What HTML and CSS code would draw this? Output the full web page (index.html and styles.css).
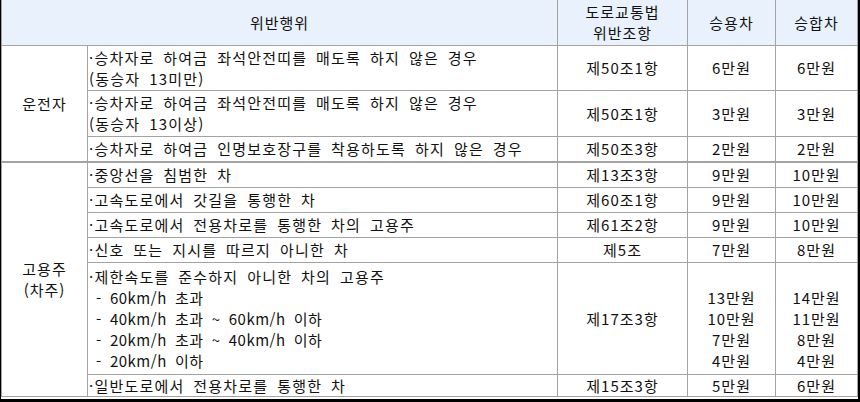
FILE: index.html
```html
<!DOCTYPE html>
<html lang="ko">
<head>
<meta charset="utf-8">
<title>위반행위</title>
<link rel="stylesheet" href="styles.css">
</head>
<body>
<div class="frame">
<table class="fines">
<colgroup>
<col class="c-who"><col class="c-act"><col class="c-law"><col class="c-car"><col class="c-van">
</colgroup>
<thead>
<tr class="r-head">
<th colspan="2">위반행위</th>
<th>도로교통법<br>위반조항</th>
<th>승용차</th>
<th>승합차</th>
</tr>
</thead>
<tbody>
<tr class="r-two">
<td class="who" rowspan="3">운전자</td>
<td class="act">·승차자로 하여금 좌석안전띠를 매도록 하지 않은 경우<br>(동승자 13미만)</td>
<td>제50조1항</td><td>6만원</td><td>6만원</td>
</tr>
<tr class="r-two2">
<td class="act">·승차자로 하여금 좌석안전띠를 매도록 하지 않은 경우<br>(동승자 13이상)</td>
<td>제50조1항</td><td>3만원</td><td>3만원</td>
</tr>
<tr class="r-one">
<td class="act">·승차자로 하여금 인명보호장구를 착용하도록 하지 않은 경우</td>
<td>제50조3항</td><td>2만원</td><td>2만원</td>
</tr>
<tr class="r-s1 group">
<td class="who" rowspan="6">고용주<br>(차주)</td>
<td class="act">·중앙선을 침범한 차</td>
<td>제13조3항</td><td>9만원</td><td>10만원</td>
</tr>
<tr class="r-s">
<td class="act">·고속도로에서 갓길을 통행한 차</td>
<td>제60조1항</td><td>9만원</td><td>10만원</td>
</tr>
<tr class="r-s">
<td class="act">·고속도로에서 전용차로를 통행한 차의 고용주</td>
<td>제61조2항</td><td>9만원</td><td>10만원</td>
</tr>
<tr class="r-s">
<td class="act">·신호 또는 지시를 따르지 아니한 차</td>
<td>제5조</td><td>7만원</td><td>8만원</td>
</tr>
<tr class="r-long">
<td class="act">·제한속도를 준수하지 아니한 차의 고용주<br><span class="sub">- 60km/h 초과</span><br><span class="sub">- 40km/h 초과 ~ 60km/h 이하</span><br><span class="sub">- 20km/h 초과 ~ 40km/h 이하</span><br><span class="sub">- 20km/h 이하</span></td>
<td>제17조3항</td>
<td><br>13만원<br>10만원<br>7만원<br>4만원</td>
<td><br>14만원<br>11만원<br>8만원<br>4만원</td>
</tr>
<tr class="r-last">
<td class="act">·일반도로에서 전용차로를 통행한 차</td>
<td>제15조3항</td><td>5만원</td><td>6만원</td>
</tr>
</tbody>
</table>
</div>
</body>
</html>
```
FILE: styles.css
```css
html, body {
  margin: 0;
  padding: 0;
  background: #fff;
}
body {
  font-family: "Noto Sans CJK KR", "Noto Sans", sans-serif;
  font-size: 15px;
  color: #111;
}
.frame {
  width: 857px;
  height: 399px;
  border-left: 1px solid #000;
  border-right: 2px solid #000;
  border-bottom: 3px solid #000;
  box-sizing: content-box;
  overflow: hidden;
}
.fines {
  border-collapse: collapse;
  table-layout: fixed;
  width: 856px;
}
.c-who { width: 86px; }
.c-act { width: 470px; }
.c-law { width: 130px; }
.c-car { width: 88px; }
.c-van { width: 82px; }
.fines th,
.fines td {
  border: 1px solid #a3a3a3;
  padding: 0 2px;
  line-height: 21px;
  text-align: center;
  vertical-align: middle;
  font-weight: normal;
  white-space: nowrap;
  letter-spacing: 1px;
}
.fines th {
  background: #e8f1fc;
  border-top-style: hidden;
}
.fines td.act {
  text-align: left;
  padding-left: 1px;
  letter-spacing: 1.2px;
  word-spacing: 3.5px;
}
.sub {
  padding-left: 7px;
  letter-spacing: 0.5px;
}
.r-head { height: 45px; }
.r-two { height: 45px; }
.r-two2 { height: 46px; }
.r-one { height: 26px; }
.group td { border-top: 2px solid #a3a3a3; }
.r-s1 { height: 25px; }
.r-s { height: 25px; }
.r-long { height: 112px; }
.r-last { height: 22px; }
```
